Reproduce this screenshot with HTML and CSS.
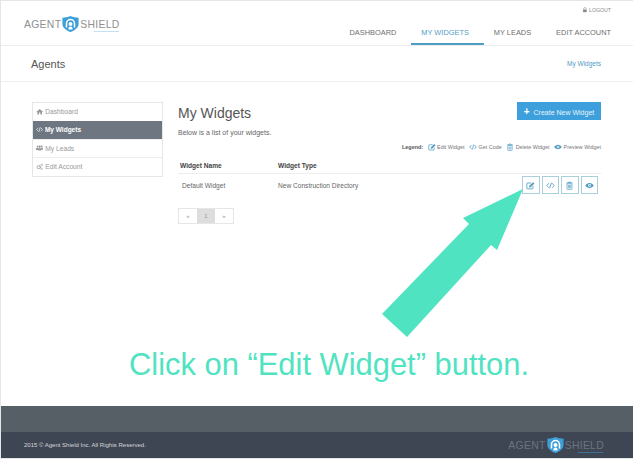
FILE: index.html
```html
<!DOCTYPE html>
<html lang="en">
<head>
    <meta charset="UTF-8">
    <title>Agent Shield - My Widgets</title>
    <link rel="stylesheet" href="styles.css">
</head>
<body>
    <svg class="icon-defs" aria-hidden="true">
        <symbol id="i-edit" viewBox="0 0 16 16"><path d="M12.500 9v3.500a1.500 1.500 0 0 1-1.500 1.500H3a1.500 1.500 0 0 1-1.500-1.500V5A1.500 1.500 0 0 1 3 3.500h6" fill="none" stroke="currentColor" stroke-width="1.500"/><path d="M6 8.500 12.500 2 15 4.500 8.500 11 5.500 11.500z" fill="currentColor"/></symbol>
        <symbol id="i-code" viewBox="0 0 16 16"><path d="M5 4 1.500 8 5 12M11 4l3.500 4L11 12M9.500 3 6.500 13" fill="none" stroke="currentColor" stroke-width="1.500"/></symbol>
        <symbol id="i-trash" viewBox="0 0 16 16"><path d="M2.500 3.500h11M6 3.500V2h4v1.500" fill="none" stroke="currentColor" stroke-width="1.400"/><path d="M3.500 5h9v9a1 1 0 0 1-1 1h-7a1 1 0 0 1-1-1zM6 7v6M8 7v6M10 7v6" fill="none" stroke="currentColor" stroke-width="1.200"/></symbol>
        <symbol id="i-eye" viewBox="0 0 16 16"><path d="M8 3.500c3.200 0 5.800 2 7.500 4.500-1.700 2.500-4.300 4.500-7.500 4.500S2.200 10.500.5 8C2.200 5.500 4.800 3.500 8 3.500z" fill="currentColor"/><circle cx="8" cy="8" r="2.600" fill="#fff"/><circle cx="8" cy="8" r="1.500" fill="currentColor"/></symbol>
        <symbol id="i-home" viewBox="0 0 16 16"><path d="M8 2 .5 8.500l1 1L3 8.200V14h3.500v-4h3v4H13V8.200l1.500 1.300 1-1z" fill="currentColor"/></symbol>
        <symbol id="i-users" viewBox="0 0 16 16"><circle cx="3.500" cy="5" r="2" fill="currentColor"/><circle cx="12.500" cy="5" r="2" fill="currentColor"/><circle cx="8" cy="6" r="2.500" fill="currentColor"/><path d="M0 12V9.500Q0 8 2 8h3v5H0zM11 8h3q2 0 2 1.500V12l-5 1zM4.500 14V11q0-2 2-2h3q2 0 2 2v3z" fill="currentColor"/></symbol>
        <symbol id="i-cogs" viewBox="0 0 16 16"><circle cx="6" cy="9" r="3.300" fill="none" stroke="currentColor" stroke-width="2.400" stroke-dasharray="2 .8"/><circle cx="12.500" cy="4" r="2" fill="none" stroke="currentColor" stroke-width="1.800" stroke-dasharray="1.400 .6"/><circle cx="12.500" cy="12.500" r="1.800" fill="none" stroke="currentColor" stroke-width="1.600" stroke-dasharray="1.400 .6"/></symbol>
        <symbol id="i-lock" viewBox="0 0 16 16"><path d="M4.500 7V5a3.500 3.500 0 0 1 7 0v2" fill="none" stroke="currentColor" stroke-width="1.500"/><rect x="3" y="7" width="10" height="7.500" rx="1" fill="currentColor"/></symbol>
        <symbol id="i-shield" viewBox="0 0 20 20"><path d="M10 .5C13 2 16.500 2.500 19.500 2.500V10c0 4.500-4.500 7.500-9.500 9.500C5 17.500.5 14.500.5 10V2.500C3.500 2.500 7 2 10 .5z" fill="#3e9fd8"/><path d="M5.300 14.200V9.500a4.700 4.700 0 0 1 9.400 0v4.700" fill="none" stroke="#fff" stroke-width="1.800"/><circle cx="10" cy="10" r="2.300" fill="#fff"/><path d="M7.500 16.500c0-2.500 1-3.500 2.500-3.500s2.500 1 2.500 3.500z" fill="#fff"/></symbol>
    </svg>

    <div class="page">
        <header class="site-header">
            <a class="logo">
                <span>AGENT</span>
                <svg class="logo-mark"><use href="#i-shield"/></svg>
                <span class="logo-shield">SHIELD</span>
            </a>
            <div class="header-right">
                <a class="logout"><svg class="icon"><use href="#i-lock"/></svg> LOGOUT</a>
                <nav class="main-nav">
                    <a>DASHBOARD</a>
                    <a class="active">MY WIDGETS</a>
                    <a>MY LEADS</a>
                    <a class="last">EDIT ACCOUNT</a>
                </nav>
            </div>
        </header>

        <div class="title-bar">
            <h1>Agents</h1>
            <a>My Widgets</a>
        </div>

        <main class="container">
            <ul class="side-menu">
                <li><svg class="icon"><use href="#i-home"/></svg> Dashboard</li>
                <li class="active"><svg class="icon"><use href="#i-code"/></svg> My Widgets</li>
                <li><svg class="icon"><use href="#i-users"/></svg> My Leads</li>
                <li><svg class="icon"><use href="#i-cogs"/></svg> Edit Account</li>
            </ul>

            <section class="content">
                <div class="content-top">
                    <div>
                        <h2>My Widgets</h2>
                        <p>Below is a list of your widgets.</p>
                    </div>
                    <button class="create-button"><b>+</b> Create New Widget</button>
                </div>

                <div class="legend">
                    <strong>Legend:</strong>
                    <span><svg class="icon"><use href="#i-edit"/></svg> Edit Widget</span>
                    <span><svg class="icon"><use href="#i-code"/></svg> Get Code</span>
                    <span><svg class="icon"><use href="#i-trash"/></svg> Delete Widget</span>
                    <span><svg class="icon"><use href="#i-eye"/></svg> Preview Widget</span>
                </div>

                <div class="table-head">
                    <div class="col-name">Widget Name</div>
                    <div>Widget Type</div>
                </div>
                <div class="table-row">
                    <div class="col-name">Default Widget</div>
                    <div>New Construction Directory</div>
                    <div class="actions">
                        <button><svg><use href="#i-edit"/></svg></button>
                        <button><svg><use href="#i-code"/></svg></button>
                        <button><svg><use href="#i-trash"/></svg></button>
                        <button><svg><use href="#i-eye"/></svg></button>
                    </div>
                </div>

                <div class="pagination">
                    <a>«</a>
                    <a class="current">1</a>
                    <a>»</a>
                </div>
            </section>
        </main>

        <div class="footer-band"></div>
        <footer class="site-footer">
            <span>2015 © Agent Shield Inc. All Rights Reserved.</span>
            <a class="logo footer-logo">
                <span>AGENT</span>
                <svg class="logo-mark"><use href="#i-shield"/></svg>
                <span class="logo-shield">SHIELD</span>
            </a>
        </footer>
    </div>

    <!-- annotation over the screenshot -->
    <svg class="arrow" viewBox="0 0 633 459" aria-hidden="true">
        <polygon points="523,189 497,250 491,245 407,337 382,314 469,224 463,218" fill="#50e3c2"/>
    </svg>
    <div class="caption">Click on “Edit Widget” button.</div>
</body>
</html>
```

FILE: styles.css
```css
/* General */
body {
    margin: 0;
    font-family: "Liberation Sans", Arial, sans-serif;
    background-color: #fff;
    color: #777;
}
.icon-defs {
    display: none;
}
.page {
    display: flex;
    flex-direction: column;
    box-sizing: border-box;
    height: 459px;
    border: 1px solid #e6e6e6;
    border-right: none;
}
.icon {
    width: 1.1em;
    height: 1.1em;
    vertical-align: -0.15em;
}
a {
    color: inherit;
}

/* Header */
.site-header {
    display: flex;
    justify-content: space-between;
    height: 44px;
    padding: 0 22px 0 23px;
    border-bottom: 1px solid #ececec;
}
.logo {
    display: flex;
    align-items: center;
    font-size: 10.4px;
    letter-spacing: 0.3px;
    color: #8f8f8f;
}
.site-header .logo {
    margin-top: 2px;
    height: 42px;
}
.logo-mark {
    width: 17px;
    height: 18px;
    margin: 0 1px;
}
.logo-shield {
    position: relative;
}
.logo-shield::after {
    content: "";
    position: absolute;
    right: 1px;
    bottom: -2px;
    width: 25px;
    height: 1px;
    background-color: #c4e1f2;
}
.header-right {
    display: flex;
    flex-direction: column;
    align-items: flex-end;
    justify-content: space-between;
}
.logout {
    margin-top: 6px;
    font-size: 5.2px;
    color: #888;
}
.main-nav {
    display: flex;
    font-size: 7.4px;
    color: #6e6e6e;
}
.main-nav a {
    padding: 0 15px 0 10px;
    line-height: 22px;
    height: 21px;
    border-bottom: 2px solid transparent;
}
.main-nav a.active {
    color: #4f9cc4;
    border-bottom-color: #4f9cc4;
}
.main-nav a.last {
    padding-right: 0;
}

/* Title bar */
.title-bar {
    display: flex;
    justify-content: space-between;
    align-items: center;
    height: 35px;
    padding: 0 32px 0 30px;
    border-bottom: 1px solid #f0f0f0;
}
.title-bar h1 {
    margin: 0;
    font-size: 11px;
    font-weight: normal;
    color: #555;
}
.title-bar a {
    font-size: 6.5px;
    color: #4f9cc4;
}

/* Main */
.container {
    flex: 1;
    display: flex;
    align-items: flex-start;
    gap: 15px;
    padding: 20px 32px 0 31px;
}
.side-menu {
    box-sizing: border-box;
    width: 131px;
    margin: 0;
    padding: 0;
    list-style: none;
    border: 1px solid #e6e6e6;
    font-size: 6.7px;
    color: #999;
}
.side-menu li {
    height: 17.75px;
    line-height: 18px;
    padding-left: 3px;
    border-top: 1px solid #eee;
}
.side-menu li:first-child {
    border-top: none;
}
.side-menu li.active {
    background-color: #6e7781;
    color: #fff;
    font-weight: bold;
    font-size: 6.5px;
    border-top: none;
}
.content {
    flex: 1;
}
.content-top {
    display: flex;
    justify-content: space-between;
    align-items: flex-start;
}
.content-top h2 {
    margin: 2px 0 7px;
    font-size: 14px;
    line-height: 18px;
    font-weight: normal;
    color: #555;
}
.content-top p {
    margin: 0;
    font-size: 7px;
    color: #666;
}
.create-button {
    width: 84px;
    height: 18px;
    padding: 0;
    border: none;
    background-color: #3d9fdc;
    color: #e8f4fb;
    font-family: inherit;
    font-size: 7px;
}
.create-button b {
    font-size: 10px;
    margin-right: 2px;
    color: #fff;
}
.legend {
    display: flex;
    justify-content: flex-end;
    align-items: center;
    gap: 4.5px;
    margin-top: 7px;
    font-size: 5.4px;
    color: #777;
}
.legend strong {
    color: #555;
}
.legend .icon {
    color: #4f9cc4;
    width: 8px;
    height: 8px;
    vertical-align: -2px;
}

/* Table */
.table-head,
.table-row {
    display: flex;
    align-items: center;
    font-size: 6.6px;
}
.col-name {
    box-sizing: border-box;
    width: 100px;
}
.table-head .col-name {
    padding-left: 2px;
}
.table-row .col-name {
    padding-left: 4px;
}
.table-head {
    margin-top: 6px;
    height: 16px;
    border-bottom: 1px solid #eee;
    font-weight: bold;
    color: #444;
}
.table-row {
    height: 22px;
    color: #666;
}
.actions {
    display: flex;
    gap: 2px;
    margin-left: auto;
    padding-right: 3px;
}
.actions button {
    display: flex;
    align-items: center;
    justify-content: center;
    width: 17.5px;
    height: 18px;
    padding: 0;
    border: 1px solid #a9cfd9;
    background-color: #fff;
    color: #4f9cc4;
}
.actions svg {
    width: 9px;
    height: 9px;
}
.pagination {
    display: inline-flex;
    margin-top: 12px;
    border: 1px solid #e6e6e6;
    font-size: 6px;
    color: #999;
}
.pagination a {
    width: 18px;
    height: 14px;
    line-height: 14px;
    text-align: center;
}
.pagination a.current {
    background-color: #ddd;
}

/* Footer */
.footer-band {
    height: 26px;
    background-color: #565e66;
}
.site-footer {
    display: flex;
    justify-content: space-between;
    align-items: center;
    height: 26px;
    padding: 0 29px 0 23px;
    background-color: #3f4653;
    color: #d5d7da;
    font-size: 6px;
}
.footer-logo {
    font-size: 10.4px;
    color: #6b7480;
}
.footer-logo .logo-shield::after {
    background-color: #3e6f96;
}

/* Annotation */
.arrow {
    position: absolute;
    top: 0;
    left: 0;
    width: 633px;
    height: 459px;
}
.caption {
    position: absolute;
    top: 347px;
    left: 129px;
    font-size: 30.9px;
    line-height: 36px;
    white-space: nowrap;
    color: #50e3c2;
}
```
